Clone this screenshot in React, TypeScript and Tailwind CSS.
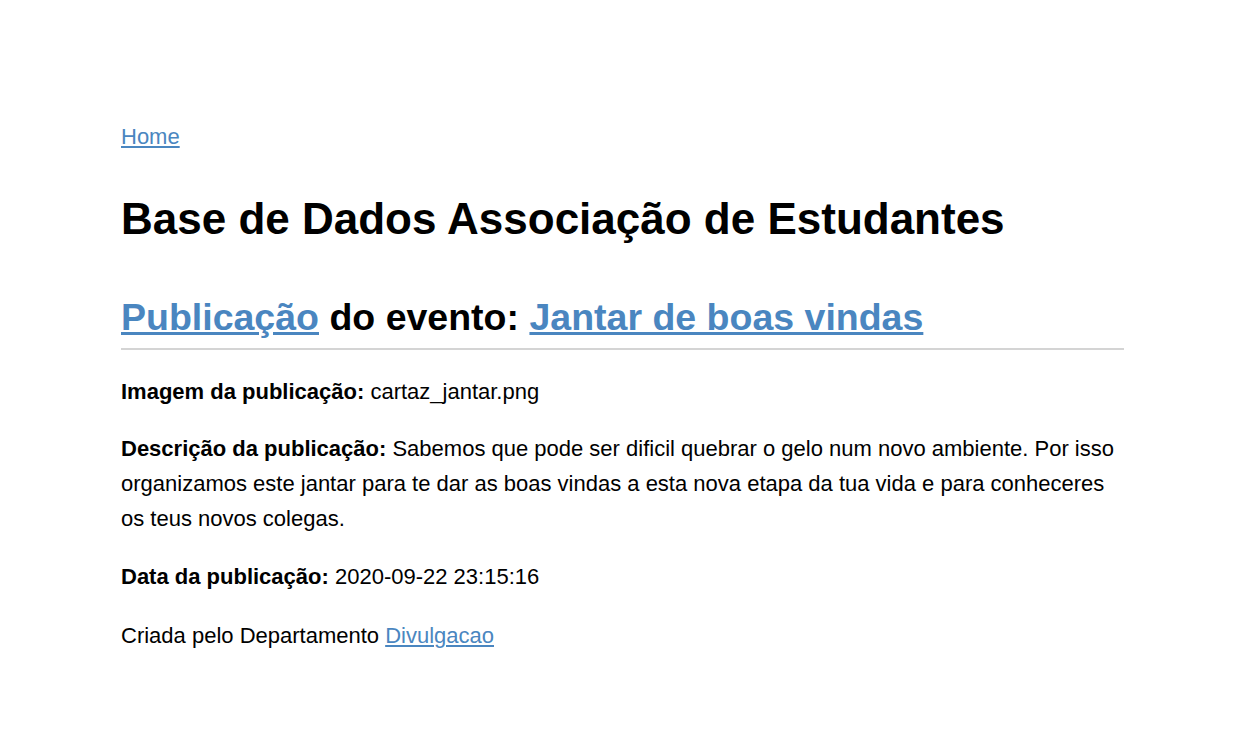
export default function App() {
  const link = 'text-[#4a86c0] underline'
  return (
    <div className="min-h-screen bg-white font-['Liberation_Sans',Arial,sans-serif] text-black">
      <div className="ml-[121px] w-[1003px] pt-[123px]">
        <a href="#" className={`${link} text-[22px] leading-[28px]`}>
          Home
        </a>

        <h1 className="mt-[42px] text-[44px] font-bold leading-[52px]">
          Base de Dados Associação de Estudantes
        </h1>

        <h2 className="mt-[50px] border-b-2 border-[#d4d4d4] pb-[9px] text-[37.5px] font-bold leading-[44px]">
          <a href="#" className={link}>Publicação</a> do evento:{' '}
          <a href="#" className={link}>Jantar de boas vindas</a>
        </h2>

        <div className="text-[22px] leading-[35px]">
          <p className="mt-[24px]">
            <b>Imagem da publicação:</b> cartaz_jantar.png
          </p>
          <p className="mt-[22px]">
            <b>Descrição da publicação:</b> Sabemos que pode ser dificil quebrar o gelo num novo ambiente. Por isso
            organizamos este jantar para te dar as boas vindas a esta nova etapa da tua vida e para conheceres os teus
            novos colegas.
          </p>
          <p className="mt-[23px]">
            <b>Data da publicação:</b> 2020-09-22 23:15:16
          </p>
          <p className="mt-[24px]">
            Criada pelo Departamento <a href="#" className={link}>Divulgacao</a>
          </p>
        </div>
      </div>
    </div>
  )
}
